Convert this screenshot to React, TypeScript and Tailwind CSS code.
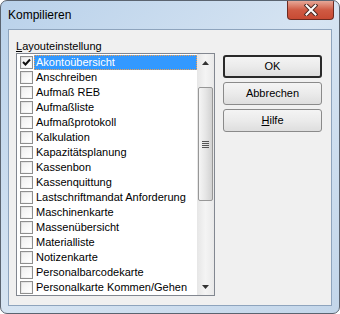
import React from 'react';

const items = [
  'Akontoübersicht',
  'Anschreiben',
  'Aufmaß REB',
  'Aufmaßliste',
  'Aufmaßprotokoll',
  'Kalkulation',
  'Kapazitätsplanung',
  'Kassenbon',
  'Kassenquittung',
  'Lastschriftmandat Anforderung',
  'Maschinenkarte',
  'Massenübersicht',
  'Materialliste',
  'Notizenkarte',
  'Personalbarcodekarte',
  'Personalkarte Kommen/Gehen',
];

const CheckBox: React.FC<{ checked?: boolean }> = ({ checked }) => (
  <div className="w-[13px] h-[13px] shrink-0 border border-[#8f8f8f] bg-gradient-to-br from-[#dcdcdc] to-[#fbfbfb] p-[1px]">
    <div className="w-full h-full bg-gradient-to-br from-[#f0f0f0] to-white flex items-center justify-center">
      {checked && (
        <svg width="9" height="9" viewBox="0 0 9 9">
          <path d="M1 4 L3.5 6.5 L8 1.5" stroke="#111" strokeWidth="2" fill="none" />
        </svg>
      )}
    </div>
  </div>
);

const Button: React.FC<{ label: React.ReactNode; primary?: boolean }> = ({ label, primary }) => (
  <div
    className={`w-[99px] h-[23px] rounded-[3px] flex items-center justify-center text-[11px] text-black bg-gradient-to-b from-[#f4f4f4] via-[#ebebeb] to-[#dedede] ${
      primary ? 'border-2 border-[#2a2a2a]' : 'border border-[#8a8a8a]'
    }`}
  >
    {label}
  </div>
);

const App: React.FC = () => {
  return (
    <div
      className="w-[340px] h-[314px] rounded-[7px] border border-[#5b6470] bg-gradient-to-br from-[#b9d1ea] via-[#d6e4f2] to-[#c3d6ea] flex flex-col overflow-hidden"
      style={{ fontFamily: '"Liberation Sans", Arial, sans-serif' }}
    >
      {/* Title bar */}
      <div className="h-[28px] flex items-start justify-between">
        <div className="pl-[7px] pt-[7px] text-[12px] text-black leading-[14px]">Kompilieren</div>
        <div className="mr-[5px] w-[47px] h-[19px] rounded-b-[4px] border border-t-0 border-[#6d2a20] bg-gradient-to-b from-[#e6a797] via-[#cf5a43] to-[#c74a33] flex items-center justify-center">
          <svg width="14" height="12" viewBox="0 0 14 12">
            <path d="M2.5 1.5 L11.5 10.5 M11.5 1.5 L2.5 10.5" stroke="#4a2a24" strokeWidth="4" strokeLinecap="square" />
            <path d="M2.5 1.5 L11.5 10.5 M11.5 1.5 L2.5 10.5" stroke="#ffffff" strokeWidth="2" strokeLinecap="square" />
          </svg>
        </div>
      </div>

      {/* Client area */}
      <div className="flex-1 mx-[7px] mb-[7px] border border-[#8ea4bd] bg-[#f0f0f0] flex pl-[7px] pt-[10px]">
        <div className="flex flex-col">
          <div className="text-[11px] leading-[13px] text-black h-[13px]">
            <span className="underline">L</span>ayouteinstellung
          </div>
          <div className="w-[199px] h-[243px] border border-[#828790] bg-white flex">
            <div className="flex-1 pt-[1px]">
              {items.map((it, i) => (
                <div key={it} className="h-[15px] flex items-center pl-[3px]">
                  <CheckBox checked={i === 0} />
                  <div
                    className={`flex-1 h-[15px] ml-[1px] pl-[1px] text-[11px] leading-[13px] whitespace-nowrap ${
                      i === 0
                        ? 'bg-[#3399ff] text-white border border-dotted border-[#f0a050]'
                        : 'text-black border border-transparent'
                    }`}
                  >
                    {it}
                  </div>
                </div>
              ))}
            </div>
            {/* Scrollbar */}
            <div className="w-[17px] h-full bg-gradient-to-r from-[#e6e6e6] via-[#f4f4f4] to-[#e9e9e9] flex flex-col items-center">
              <div className="h-[17px] w-full flex items-center justify-center">
                <svg width="7" height="4" viewBox="0 0 7 4">
                  <path d="M0 4 L3.5 0 L7 4 Z" fill="#333" />
                </svg>
              </div>
              <div className="mt-[16px] w-[15px] h-[114px] rounded-[2px] border border-[#979797] bg-gradient-to-r from-[#f5f5f5] via-[#e6e6e6] to-[#d2d2d2] flex items-center justify-center">
                <svg width="7" height="7" viewBox="0 0 7 7">
                  <path d="M0 0.5 H7 M0 2.5 H7 M0 4.5 H7 M0 6.5 H7" stroke="#555" strokeWidth="1" />
                </svg>
              </div>
              <div className="flex-1" />
              <div className="h-[17px] w-full flex items-center justify-center">
                <svg width="7" height="4" viewBox="0 0 7 4">
                  <path d="M0 0 L3.5 4 L7 0 Z" fill="#333" />
                </svg>
              </div>
            </div>
          </div>
        </div>
        <div className="ml-[8px] pt-[15px] flex flex-col gap-[4px]">
          <Button label="OK" primary />
          <Button label="Abbrechen" />
          <Button
            label={
              <span>
                <span className="underline">H</span>ilfe
              </span>
            }
          />
        </div>
      </div>
    </div>
  );
};

export default App;
